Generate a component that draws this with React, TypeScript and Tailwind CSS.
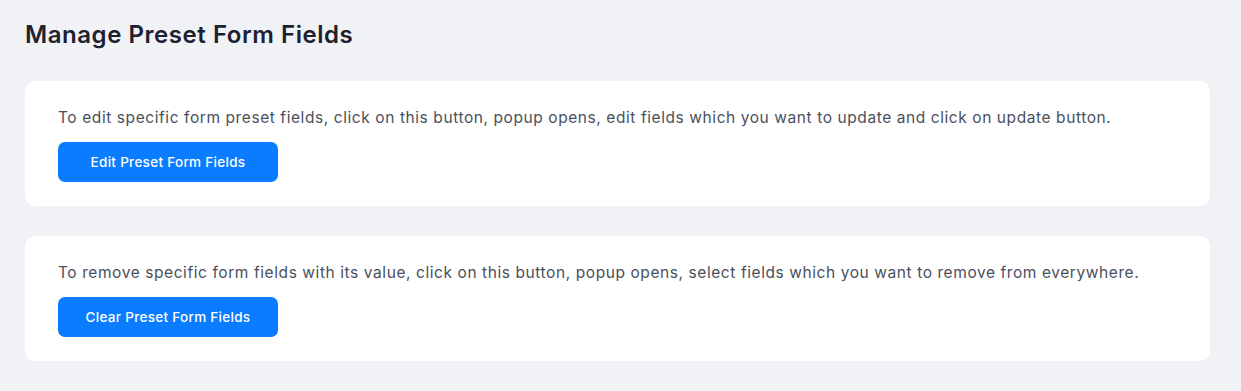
export default function App() {
  const sections = [
    {
      text: "To edit specific form preset fields, click on this button, popup opens, edit fields which you want to update and click on update button.",
      label: "Edit Preset Form Fields",
    },
    {
      text: "To remove specific form fields with its value, click on this button, popup opens, select fields which you want to remove from everywhere.",
      label: "Clear Preset Form Fields",
    },
  ];

  return (
    <div className="min-h-[391px] bg-[#f1f2f6] pl-[25px] pr-[31px] pt-[21px] pb-[31px] font-['Inter',sans-serif]">
      <h1 className="text-[24px] font-semibold leading-[28px] tracking-[0.55px] text-[#1d2130]">Manage Preset Form Fields</h1>
      <div className="mt-[32px] flex flex-col gap-[30px]">
        {sections.map((s) => (
          <div key={s.label} className="rounded-[10px] bg-white px-[33px] pt-[26px] pb-[24px]">
            <p className="text-[15.5px] leading-[22px] tracking-[0.58px] text-[#4a4f5c]">{s.text}</p>
            <button className="mt-[13px] flex h-[40px] w-[220px] items-center justify-center rounded-[7px] bg-[#0a7cff] text-[13.5px] font-medium tracking-[0.3px] text-white">
              {s.label}
            </button>
          </div>
        ))}
      </div>
    </div>
  );
}
